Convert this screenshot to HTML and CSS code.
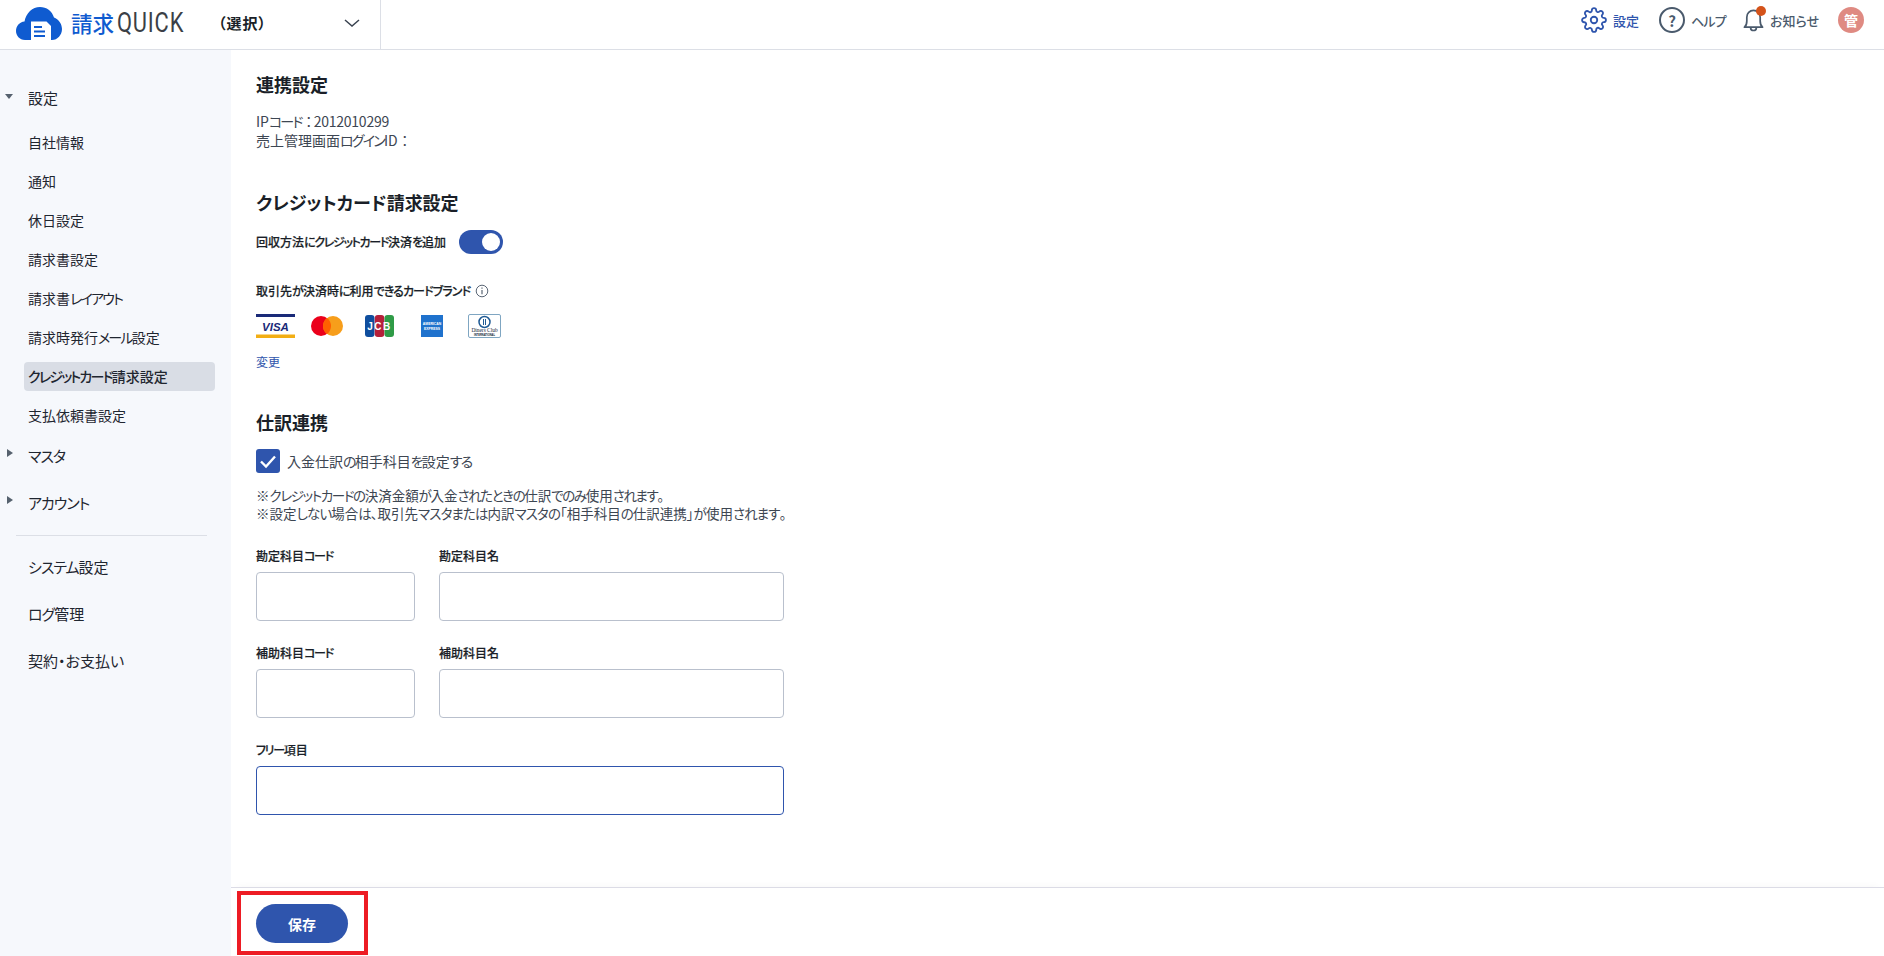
FILE: index.html
```html
<!DOCTYPE html>
<html lang="ja">
<head>
<meta charset="utf-8">
<title>請求QUICK</title>
<link rel="stylesheet" href="styles.css">
</head>
<body>
<div class="app">
  <header class="topbar">
    <div class="brand">
      <svg class="brand-mark" viewBox="0 0 46 33" aria-hidden="true">
        <path fill="#0f5bd0" d="M9 33C3.500 33 0 28.500 0 24c0-5 3.500-9 8.500-9.500C10 6 16.500 0 24 0c6.500 0 12 4 14 10.500 4.500 1.500 8 6.500 8 11.500 0 6-4.500 11-10 11z"/>
        <path fill="#fff" d="M15 14.500h15.500l4.500 4.500V33H15z"/>
        <path stroke="#0f5bd0" stroke-width="2" d="M18 20h8M18 24.500h11M18 29h11"/>
      </svg>
      <span class="brand-name"><span class="brand-ja">請求</span><span class="brand-en">QUICK</span></span>
    </div>
    <div class="company">
      <span class="company-name">（選択）</span>
      <svg class="chevron" viewBox="0 0 16 8" aria-hidden="true"><path d="M1 1l7 6 7-6" fill="none" stroke="#3a4350" stroke-width="1.500"/></svg>
    </div>
    <nav class="top-actions">
      <a class="top-link is-blue link-settings">
        <svg class="gear" viewBox="0 0 24 24" aria-hidden="true"><circle cx="12" cy="12" r="3"/><path d="M19.400 15a1.650 1.650 0 0 0 .33 1.820l.06.06a2 2 0 0 1 0 2.830 2 2 0 0 1-2.830 0l-.06-.06a1.650 1.650 0 0 0-1.820-.33 1.650 1.650 0 0 0-1 1.510V21a2 2 0 0 1-2 2 2 2 0 0 1-2-2v-.09A1.650 1.650 0 0 0 9 19.400a1.650 1.650 0 0 0-1.820.33l-.06.06a2 2 0 0 1-2.830 0 2 2 0 0 1 0-2.830l.06-.06a1.650 1.650 0 0 0 .33-1.820 1.650 1.650 0 0 0-1.510-1H3a2 2 0 0 1-2-2 2 2 0 0 1 2-2h.09A1.650 1.650 0 0 0 4.600 9a1.650 1.650 0 0 0-.33-1.820l-.06-.06a2 2 0 0 1 0-2.830 2 2 0 0 1 2.830 0l.06.06a1.650 1.650 0 0 0 1.820.33H9a1.650 1.650 0 0 0 1-1.510V3a2 2 0 0 1 2-2 2 2 0 0 1 2 2v.09a1.650 1.650 0 0 0 1 1.510 1.650 1.650 0 0 0 1.820-.33l.06-.06a2 2 0 0 1 2.830 0 2 2 0 0 1 0 2.830l-.06.06a1.650 1.650 0 0 0-.33 1.820V9a1.650 1.650 0 0 0 1.510 1H21a2 2 0 0 1 2 2 2 2 0 0 1-2 2h-.09a1.650 1.650 0 0 0-1.510 1z"/></svg>
        設定
      </a>
      <a class="top-link link-help">
        <span class="help-icon">?</span>
        <span class="help-text">ヘルプ</span>
      </a>
      <a class="top-link">
        <span class="bell-wrap">
          <svg class="bell" viewBox="0 0 22 26" aria-hidden="true"><path d="M1.500 20.500c2-1.500 2.500-3 2.500-6.500V10c0-4 3-7 7-7s7 3 7 7v4c0 3.500.5 5 2.500 6.500zM8 21c0 4 6 4 6 0" fill="none" stroke="#4a5a6c" stroke-width="1.800" stroke-linejoin="round"/></svg>
          <span class="bell-dot"></span>
        </span>
        お知らせ
      </a>
      <span class="avatar">管</span>
    </nav>
  </header>

  <div class="body">
    <aside class="sidebar">
      <div class="nav-parent"><span class="tri tri-down"></span>設定</div>
      <ul class="nav-list">
        <li class="nav-item"><span>自社情報</span></li>
        <li class="nav-item"><span>通知</span></li>
        <li class="nav-item"><span>休日設定</span></li>
        <li class="nav-item"><span>請求書設定</span></li>
        <li class="nav-item"><span>請求書<span class="kt">レイアウト</span></span></li>
        <li class="nav-item"><span>請求時発行<span class="kt">メール</span>設定</span></li>
        <li class="nav-item is-active"><span><span class="kt">クレジットカード</span>請求設定</span></li>
        <li class="nav-item"><span>支払依頼書設定</span></li>
      </ul>
      <div class="nav-parent nav-parent-closed"><span class="tri tri-right"></span><span class="kt-s">マスタ</span></div>
      <div class="nav-parent nav-parent-closed"><span class="tri tri-right"></span><span class="kt-s">アカウント</span></div>
      <hr class="nav-rule">
      <div class="nav-top"><span class="kt-s">システム</span>設定</div>
      <div class="nav-top"><span class="kt-s">ログ</span>管理</div>
      <div class="nav-top">契約・お支払い</div>
    </aside>

    <div class="panel">
      <main class="content">
        <section class="sec-link">
          <h2 class="sec-title">連携設定</h2>
          <p class="info-lines">IP<span class="kt">コード</span><span class="wide colon-tight">：</span><span class="digits">2012010299</span><br>売上管理画面<span class="kt">ログイン</span>ID<span class="wide">：</span></p>
        </section>

        <section class="sec-card">
          <h2 class="sec-title">クレジットカード請求設定</h2>
          <div class="toggle-row">
            <span class="field-label">回収方法<span class="kl">にクレジットカード</span>決済<span class="kl">を</span>追加</span>
            <span class="toggle"><span class="toggle-knob"></span></span>
          </div>
          <div class="brand-label">
            <span class="field-label">取引先<span class="kl2">が</span>決済時<span class="kl2">に</span>利用<span class="kl2">できるカードブランド</span></span>
            <svg class="info-icon" viewBox="0 0 14 14" aria-hidden="true"><circle cx="7" cy="7" r="5.800" fill="none" stroke="#5a6675" stroke-width="1"/><path d="M7 6v4.200M7 3.600v1.200" stroke="#5a6675" stroke-width="1.200"/></svg>
          </div>
          <div class="cards">
            <svg class="card-visa" viewBox="0 0 39 24" aria-hidden="true"><rect width="39" height="3" fill="#1a2a78"/><rect y="20.500" width="39" height="3.500" fill="#f2ae14"/><text x="19.500" y="17" class="t-visa">VISA</text></svg>
            <svg class="card-mc" viewBox="0 0 32 20" aria-hidden="true"><circle cx="10" cy="10" r="10" fill="#eb001b"/><circle cx="22" cy="10" r="10" fill="#f79e1b"/><path d="M16 2a10 10 0 0 1 0 16 10 10 0 0 1 0-16z" fill="#ff5f00"/></svg>
            <svg class="card-jcb" viewBox="0 0 29 22" aria-hidden="true"><rect width="9.500" height="22" rx="3" fill="#0f4e9e"/><rect x="9.800" width="9.500" height="22" rx="3" fill="#b5203a"/><rect x="19.500" width="9.500" height="22" rx="3" fill="#2f9b47"/><text x="14.500" y="15" class="t-jcb">JCB</text></svg>
            <svg class="card-amex" viewBox="0 0 22 22" aria-hidden="true"><rect width="22" height="22" fill="#1f72cd"/><text x="11" y="10" class="t-amex">AMERICAN</text><text x="11" y="15" class="t-amex">EXPRESS</text></svg>
            <svg class="card-diners" viewBox="0 0 33 24" aria-hidden="true"><rect x=".5" y=".5" width="32" height="23" rx="1.500" fill="#fff" stroke="#7fa6c2"/><circle cx="16.500" cy="8" r="5.500" fill="none" stroke="#1f5a94" stroke-width="1.500"/><path d="M15.500 5v6M17.500 5v6" stroke="#1f5a94"/><text x="16.500" y="18" class="t-din">Diners Club</text><text x="16.500" y="22" class="t-din2">INTERNATIONAL</text></svg>
          </div>
          <a class="change-link">変更</a>
        </section>

        <section class="sec-journal">
          <h2 class="sec-title">仕訳連携</h2>
          <div class="check-row">
            <span class="checkbox"><svg viewBox="0 0 24 24" aria-hidden="true"><path d="M5 12.500l5 5 9-10" fill="none" stroke="#fff" stroke-width="2.400"/></svg></span>
            <span class="check-text">入金仕訳<span class="kt">の</span>相手科目<span class="kt">を</span>設定<span class="kt">する</span></span>
          </div>
          <p class="note">※<span class="kn">クレジットカードの</span>決済金額<span class="kn">が</span>入金<span class="kn">されたときの</span>仕訳<span class="kn">でのみ</span>使用<span class="kn">されます</span>。<br>※設定<span class="kn2">しない</span>場合<span class="kn2">は</span>、取引先<span class="kn2">マスタまたは</span>内訳<span class="kn2">マスタの</span>「相手科目<span class="kn2">の</span>仕訳連携」<span class="kn2">が</span>使用<span class="kn2">されます</span>。</p>
          <div class="form-grid">
            <label class="field"><span class="field-label">勘定科目<span class="kl">コード</span></span><input class="text-input" type="text"></label>
            <label class="field"><span class="field-label">勘定科目名</span><input class="text-input" type="text"></label>
            <label class="field"><span class="field-label">補助科目<span class="kl">コード</span></span><input class="text-input" type="text"></label>
            <label class="field"><span class="field-label">補助科目名</span><input class="text-input" type="text"></label>
            <label class="field field-wide"><span class="field-label"><span class="kl">フリー</span>項目</span><input class="text-input is-focus" type="text"></label>
          </div>
        </section>
      </main>
      <footer class="footer">
        <button class="save-btn" type="button">保存</button>
        <span class="callout"></span>
      </footer>
    </div>
  </div>
</div>
</body>
</html>
```
FILE: styles.css
```css
* { box-sizing: border-box; }
html, body { margin: 0; height: 100%; }
body {
  font-family: "Noto Sans CJK JP", "Noto Sans", sans-serif;
  font-feature-settings: "palt";
  color: #1f2630;
  background: #fff;
  overflow: hidden;
}
.kt { letter-spacing: -1.800px; }
.kt-s { letter-spacing: -1px; }
.kl { letter-spacing: -1.300px; }
.kl2 { letter-spacing: -.9px; }
.kn { letter-spacing: -1.400px; }
.kn2 { letter-spacing: -.9px; }
.wide { font-feature-settings: normal; }
.colon-tight { margin-right: -2px; }
.digits { letter-spacing: -.25px; }
.app { height: 956px; display: flex; flex-direction: column; }
.topbar {
  height: 50px;
  flex: none;
  display: flex;
  align-items: center;
  border-bottom: 1px solid #dcdfe6;
}
.brand { width: 204px; display: flex; align-items: center; padding: 0 0 3px 16px; flex: none; }
.brand-mark { width: 46px; height: 33px; flex: none; }
.brand-name { margin-left: 9px; display: flex; align-items: center; line-height: 30px; }
.brand-ja { font-size: 21.500px; color: #0f5bd0; font-weight: 500; }
.brand-en {
  display: inline-block;
  width: 67px;
  margin-left: 3px;
  font: 400 27px "Roboto", sans-serif;
  color: #3b3f46;
  letter-spacing: 1px;
  transform: scaleX(.81);
  transform-origin: left center;
  white-space: nowrap;
}
.company {
  width: 177px;
  height: 49px;
  flex: none;
  display: flex;
  align-items: center;
  justify-content: space-between;
  padding: 0 20px 4px 14px;
  border-right: 1px solid #dcdfe6;
}
.company-name { font-size: 15px; font-weight: 700; color: #1a1f28; letter-spacing: 1px; }
.chevron { width: 16px; height: 8px; }
.top-actions { margin-left: auto; display: flex; align-items: center; padding: 0 20px 9px 0; }
.top-link { display: flex; align-items: center; font-size: 13px; color: #4a5a6c; margin-right: 19px; font-weight: 500; }
.top-link.is-blue { color: #2f55ad; }
.link-settings { margin-right: 20px; }
.link-help { margin-right: 17px; }
.help-text { letter-spacing: -.8px; }
.gear { width: 26px; height: 26px; margin-right: 6px; fill: none; stroke: #2f55ad; stroke-width: 1.700; }
.help-icon {
  width: 26px; height: 26px;
  margin-right: 6px;
  border: 2px solid #4a5a6c;
  border-radius: 50%;
  display: flex; align-items: center; justify-content: center;
  font-size: 15px; font-weight: 700;
  color: #4a5a6c;
  line-height: 1;
}
.bell-wrap { position: relative; width: 21px; height: 26px; margin-right: 6px; }
.bell { width: 21px; height: 26px; display: block; }
.bell-dot { position: absolute; top: -1px; right: -2px; width: 10px; height: 10px; border-radius: 50%; background: #d4531a; }
.avatar {
  width: 26px; height: 26px;
  border-radius: 50%;
  background: #df8a82;
  color: #fff;
  font-size: 14px;
  font-weight: 700;
  display: flex; align-items: center; justify-content: center;
  line-height: 1;
}
.body { flex: 1; display: flex; min-height: 0; }
.sidebar { width: 231px; flex: none; background: #f6f8fc; padding-top: 28px; font-size: 14px; color: #1f2630; }
.nav-parent { height: 39px; display: flex; align-items: center; padding-left: 28px; position: relative; font-size: 15px; }
.nav-parent-closed { height: 47px; }
.tri { position: absolute; width: 0; height: 0; }
.tri-down { left: 5px; top: 16px; border-left: 4px solid transparent; border-right: 4px solid transparent; border-top: 5px solid #56616e; }
.tri-right { left: 7px; top: 17px; border-top: 4px solid transparent; border-bottom: 4px solid transparent; border-left: 6px solid #56616e; }
.nav-list { list-style: none; margin: 10px 0 0; padding: 0 16px 0 24px; }
.nav-item { height: 29px; margin-bottom: 10.100px; display: flex; align-items: center; padding-left: 4px; border-radius: 4px; }
.nav-item:last-child { margin-bottom: 2px; }
.nav-item.is-active { background: #d9dde5; font-weight: 500; }
.nav-rule { border: 0; border-top: 1px solid #dcdfe6; margin: 9px 24px 7px 16px; }
.nav-top { height: 47px; display: flex; align-items: center; padding-left: 28px; font-size: 15px; }
.panel { flex: 1; min-width: 0; display: flex; flex-direction: column; background: #fff; }
.content { flex: 1; min-height: 0; padding: 21px 25px 0; }
.sec-title { margin: 0; font-size: 18px; font-weight: 700; line-height: 26px; color: #1a1f28; }
.sec-link { height: 118px; }
.info-lines { margin: 15px 0 0; font-size: 14px; line-height: 19px; color: #3d4652; }
.sec-card { height: 220px; }
.toggle-row { display: flex; align-items: center; margin-top: 15px; height: 24px; }
.field-label { font-size: 12px; font-weight: 500; line-height: 18px; color: #1a1f28; display: block; -webkit-text-stroke: .2px #1a1f28; }
.toggle { width: 44px; height: 24px; border-radius: 12px; background: #2f55ad; margin-left: 13px; position: relative; }
.toggle-knob { position: absolute; right: 3px; top: 3px; width: 18px; height: 18px; border-radius: 50%; background: #fff; }
.brand-label { display: flex; align-items: center; margin-top: 28px; }
.info-icon { width: 14px; height: 14px; margin-left: 5px; }
.cards { display: flex; align-items: center; margin-top: 14px; height: 24px; }
.cards svg { display: block; flex: none; }
.card-visa { width: 39px; height: 24px; }
.card-mc { width: 32px; height: 20px; margin-left: 16px; }
.card-jcb { width: 29px; height: 22px; margin-left: 22px; }
.card-amex { width: 22px; height: 22px; margin-left: 27px; }
.card-diners { width: 33px; height: 24px; margin-left: 25px; }
.t-visa { font: italic 700 11.500px "Liberation Sans", sans-serif; fill: #1a2a78; text-anchor: middle; }
.t-jcb { font: 700 10px "Liberation Sans", sans-serif; fill: #fff; text-anchor: middle; letter-spacing: 1.500px; }
.t-amex { font: 700 3.400px "Liberation Sans", sans-serif; fill: #fff; text-anchor: middle; }
.t-din { font: 5.400px "Liberation Serif", serif; fill: #123; text-anchor: middle; }
.t-din2 { font: 700 2.600px "Liberation Sans", sans-serif; fill: #123; text-anchor: middle; }
.change-link { display: block; margin-top: 15px; font-size: 12px; line-height: 18px; color: #2f55ad; }
.check-row { display: flex; align-items: center; margin-top: 14px; height: 24px; }
.checkbox { width: 24px; height: 24px; border-radius: 3px; background: #2f55ad; flex: none; }
.checkbox svg { width: 24px; height: 24px; display: block; }
.check-text { margin-left: 7px; font-size: 14px; color: #3d4652; }
.note { margin: 13px 0 0; font-size: 13.500px; line-height: 18px; color: #3d4652; }
.form-grid { display: grid; grid-template-columns: 159px 345px; column-gap: 24px; row-gap: 23px; margin-top: 25px; width: 528px; }
.field { display: block; }
.field-wide { grid-column: 1 / -1; }
.field .field-label { margin-bottom: 7px; }
.text-input { display: block; width: 100%; height: 49px; border: 1px solid #b9c0cd; border-radius: 4px; background: #fff; outline: none; }
.text-input.is-focus { border-color: #2f55ad; }
.footer {
  height: 69px;
  flex: none;
  border-top: 1px solid #dcdce6;
  padding: 16px 25px 0;
  position: relative;
  box-shadow: 0 -6px 8px -6px rgba(0, 0, 0, .04);
}
.save-btn {
  width: 92px; height: 39px;
  border: 0; border-radius: 20px;
  background: #2f55ad; color: #fff;
  font: 700 14px "Noto Sans CJK JP", sans-serif;
  font-feature-settings: "palt";
  display: block;
}
.callout { position: absolute; left: 6px; top: 3px; width: 131px; height: 64px; border: 4px solid #ed1c24; }
```
